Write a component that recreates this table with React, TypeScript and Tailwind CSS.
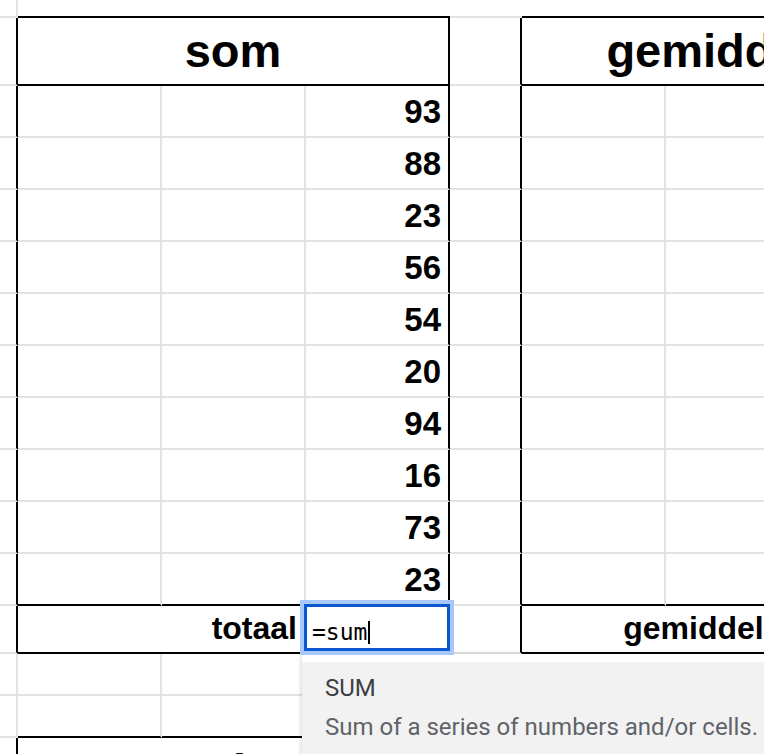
import React from "react";

const G = "border-[#e2e2e2]";

function C({
  className = "",
  children,
}: {
  className?: string;
  children?: React.ReactNode;
}) {
  return <div className={"border-r-2 border-b-2 " + className}>{children}</div>;
}

const nums = [93, 88, 23, 56, 54, 20, 94, 16, 73, 23];

export default function App() {
  return (
    <div className="relative w-[764px] h-[754px] overflow-hidden bg-white text-black font-['Liberation_Sans',Arial,sans-serif]">
      <div className="grid grid-cols-[18px_144px_144px_144px_72px_144px_144px_144px] grid-rows-[18px_68px_repeat(10,52px)_48px_42px_42px_68px] w-[954px]">
        {/* row 0 */}
        <div className="border-r-2 border-b-2 border-r-[#e2e2e2] border-b-[#e2e2e2]" />
        <div className="col-span-3 border-b-2 border-b-black" />
        <div className="border-b-2 border-b-[#e2e2e2]" />
        <div className="col-span-3 border-b-2 border-b-black" />

        {/* row 1: headers */}
        <div className="border-r-2 border-b-2 border-r-black border-b-[#e2e2e2]" />
        <div className="col-span-3 border-r-2 border-b-2 border-black flex items-end justify-center pb-[6px] text-[47px] leading-[54px] font-bold">
          som
        </div>
        <div className="border-r-2 border-b-2 border-r-black border-b-[#e2e2e2]" />
        <div className="col-span-3 border-r-2 border-b-2 border-black flex items-end justify-center pb-[6px] text-[47px] leading-[54px] font-bold">
          gemiddelde
        </div>

        {/* data rows */}
        {nums.map((n, i) => {
          const last = i === nums.length - 1;
          const b = last ? "border-b-black" : "border-b-[#e2e2e2]";
          return (
            <React.Fragment key={i}>
              <div className="border-r-2 border-b-2 border-r-black border-b-[#e2e2e2]" />
              <div className={"border-r-2 border-b-2 border-r-[#e2e2e2] " + b} />
              <div className={"border-r-2 border-b-2 border-r-[#e2e2e2] " + b} />
              <div
                className={
                  "border-r-2 border-b-2 border-r-black flex items-end justify-end pr-[7px] pb-[5px] text-[33px] leading-[38px] font-bold " +
                  b
                }
              >
                {n}
              </div>
              <div className="border-r-2 border-b-2 border-r-black border-b-[#e2e2e2]" />
              <div className={"border-r-2 border-b-2 border-r-[#e2e2e2] " + b} />
              <div className={"border-r-2 border-b-2 border-r-[#e2e2e2] " + b} />
              <div className={"border-r-2 border-b-2 border-r-black " + b} />
            </React.Fragment>
          );
        })}

        {/* total row */}
        <div className="border-r-2 border-b-2 border-r-black border-b-[#e2e2e2]" />
        <div className="col-span-2 border-r-2 border-b-2 border-black flex items-end justify-end pr-[7px] pb-[5px] text-[32px] leading-[37px] font-bold">
          totaal
        </div>
        <div className="border-r-2 border-b-2 border-black" />
        <div className="border-r-2 border-b-2 border-r-black border-b-[#e2e2e2]" />
        <div className="col-span-2 border-r-2 border-b-2 border-r-[#e2e2e2] border-b-black flex items-end justify-end pr-[7px] pb-[5px] text-[32px] leading-[37px] font-bold">
          gemiddelde
        </div>
        <div className="border-r-2 border-b-2 border-black" />

        {/* empty row */}
        <C className={G} />
        <C className={G} />
        <C className={G} />
        <C className={G} />
        <C className={G} />
        <C className={G} />
        <C className={G} />
        <C className={G} />

        {/* row above third table */}
        <div className="border-r-2 border-b-2 border-[#e2e2e2]" />
        <div className="border-r-2 border-b-2 border-r-[#e2e2e2] border-b-black" />
        <div className="border-r-2 border-b-2 border-r-[#e2e2e2] border-b-black" />
        <div className="border-r-2 border-b-2 border-r-[#e2e2e2] border-b-black" />
        <div className="border-r-2 border-b-2 border-[#e2e2e2]" />
        <div className="border-r-2 border-b-2 border-r-[#e2e2e2] border-b-black" />
        <div className="border-r-2 border-b-2 border-r-[#e2e2e2] border-b-black" />
        <div className="border-r-2 border-b-2 border-r-[#e2e2e2] border-b-black" />

        {/* third table header */}
        <div className="border-r-2 border-b-2 border-r-black border-b-[#e2e2e2]" />
        <div className="col-span-3 border-r-2 border-b-2 border-black flex items-end justify-center pb-[6px] text-[47px] leading-[54px] font-bold">
          min
        </div>
        <div className="border-r-2 border-b-2 border-r-black border-b-[#e2e2e2]" />
        <div className="col-span-3 border-r-2 border-b-2 border-black" />
      </div>

      {/* autocomplete dropdown */}
      <div className="absolute left-[302px] top-[654px] w-[480px] h-[120px] bg-white shadow-[0_1px_5px_rgba(0,0,0,0.22)] pt-[8px]">
        <div className="h-full bg-[#f2f2f2] pl-[23px] pt-[12px] font-['Roboto',sans-serif] text-[24px]">
          <div className="leading-[28px] text-[#3c4043]">SUM</div>
          <div className="leading-[28px] mt-[11px] text-[#5f6368]">
            Sum of a series of numbers and/or cells.
          </div>
        </div>
      </div>

      {/* active cell editor */}
      <div className="absolute left-[300px] top-[600px] w-[154px] h-[55px] border-4 border-[#a8c7fa]">
        <div className="h-full border-[3px] border-[#0b57d0] bg-white flex items-center pl-[5px] pt-[10px]">
          <span className="font-['DejaVu_Sans_Mono',monospace] text-[23px] leading-[25px] text-black">
            =sum
          </span>
          <span className="ml-[1px] w-[2px] h-[23px] bg-black" />
        </div>
      </div>
    </div>
  );
}
